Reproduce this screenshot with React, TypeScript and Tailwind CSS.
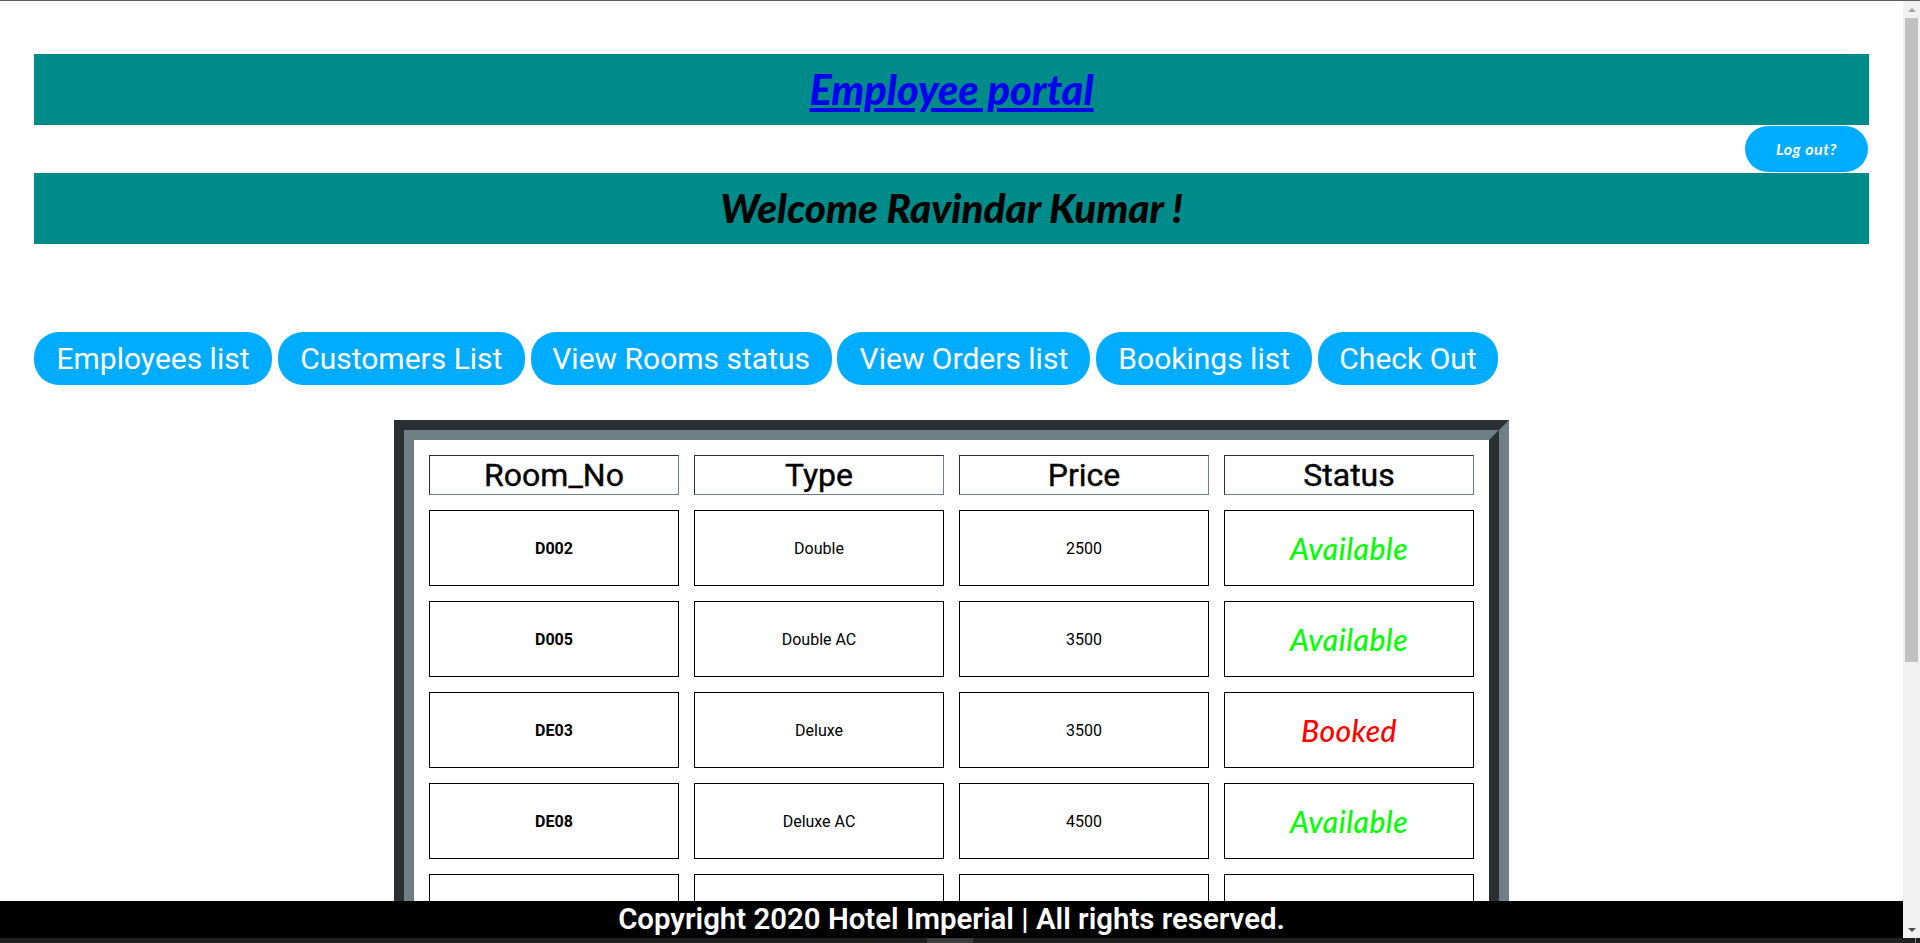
import React from 'react';

const navLinks = [
  { label: 'Employees list', width: 'w-[238px]' },
  { label: 'Customers List', width: 'w-[247px]' },
  { label: 'View Rooms status', width: 'w-[301px]' },
  { label: 'View Orders list', width: 'w-[253px]' },
  { label: 'Bookings list', width: 'w-[216px]' },
  { label: 'Check Out', width: 'w-[180px]' },
];

const rooms = [
  { no: 'D002', type: 'Double', price: 2500, status: 'Available' },
  { no: 'D005', type: 'Double AC', price: 3500, status: 'Available' },
  { no: 'DE03', type: 'Deluxe', price: 3500, status: 'Booked' },
  { no: 'DE08', type: 'Deluxe AC', price: 4500, status: 'Available' },
  { no: 'S001', type: 'Suite', price: 6500, status: 'Available' },
];

const headings = ['Room_No', 'Type', 'Price', 'Status'];

const cursive = "font-['Lato',cursive]";

export default function App() {
  return (
    <div className="flex h-[943px] w-full flex-col overflow-hidden bg-white font-['Roboto',sans-serif] text-black">
      <div className="h-px shrink-0 bg-[#5f5f5f]" />

      <div className="flex min-h-0 flex-1">
        <div className="relative min-w-0 flex-1 overflow-hidden">
          <div className="px-[34px] pt-[53px]">
            <div className="flex h-[71px] items-center justify-center bg-[#008b8b]">
              <a href="#" className={`${cursive} text-[41.5px] font-black italic text-[#0000ee] underline`}>
                Employee portal
              </a>
            </div>

            <div className="flex h-[48px] items-center justify-end pr-px">
              <button className={`${cursive} h-[46px] w-[123px] rounded-[23px] bg-[#00acff] text-[16px] font-bold italic tracking-[0.5px] text-white`}>
                Log out?
              </button>
            </div>

            <div className="flex h-[71px] items-center justify-center bg-[#008b8b]">
              <h1 className={`${cursive} text-[40.4px] font-black italic`}>Welcome Ravindar Kumar !</h1>
            </div>

            <nav className="mt-[88px] flex gap-[5.8px]">
              {navLinks.map((link) => (
                <a
                  key={link.label}
                  href="#"
                  className={`flex h-[53px] items-center justify-center rounded-[25px] bg-[#00acff] text-[30px] text-white ${link.width}`}
                >
                  {link.label}
                </a>
              ))}
            </nav>

            <table className="mx-auto mt-[35px] w-[1115px] table-fixed border-separate border-spacing-[15px] border-[20px] border-[#6e7f86] [border-style:groove]">
              <thead>
                <tr>
                  {headings.map((h) => (
                    <th key={h} className="h-[40px] border border-[#6e7f86] p-0 text-[32px] leading-none font-normal [-webkit-text-stroke:0.4px_black] [border-style:inset]">
                      {h}
                    </th>
                  ))}
                </tr>
              </thead>
              <tbody>
                {rooms.map((room) => (
                  <tr key={room.no}>
                    <td className="h-[76px] border border-black p-0 pt-px text-center text-[16px] font-bold">{room.no}</td>
                    <td className="border border-black p-0 pt-px text-center text-[16px]">{room.type}</td>
                    <td className="border border-black p-0 pt-px text-center text-[16px]">{room.price}</td>
                    <td
                      className={`${cursive} border border-black p-0 text-center text-[30px] font-medium italic tracking-[0.5px] ${
                        room.status === 'Booked' ? 'text-[#ff0000]' : 'text-[#00ff00]'
                      }`}
                    >
                      {room.status}
                    </td>
                  </tr>
                ))}
              </tbody>
            </table>
          </div>

          <footer className="absolute bottom-0 left-0 flex h-[37px] w-full items-center justify-center bg-black text-[29.4px] font-semibold text-white">
            Copyright 2020 Hotel Imperial | All rights reserved.
          </footer>
        </div>

        {/* scrollbar */}
        <div className="flex w-[17px] shrink-0 flex-col items-center bg-[#f1f1f1]">
          <div className="flex h-[17px] w-full items-center justify-center">
            <svg width="8" height="4" viewBox="0 0 8 4"><path d="M4 0 8 4H0z" fill="#a3a3a3" /></svg>
          </div>
          <div className="h-[644px] w-[13px] bg-[#c1c1c1]" />
          <div className="flex-1" />
          <div className="flex h-[17px] w-full items-center justify-center">
            <svg width="8" height="4" viewBox="0 0 8 4"><path d="M0 0h8L4 4z" fill="#505050" /></svg>
          </div>
        </div>
      </div>

      <div className="flex h-[5px] shrink-0 bg-[#202020] pl-[927px] pr-[4px]">
        <div className="w-[46px] bg-[#3c3c3c]" />
        <div className="flex-1" />
        <div className="w-px bg-[#8a8a8a]" />
      </div>
    </div>
  );
}
